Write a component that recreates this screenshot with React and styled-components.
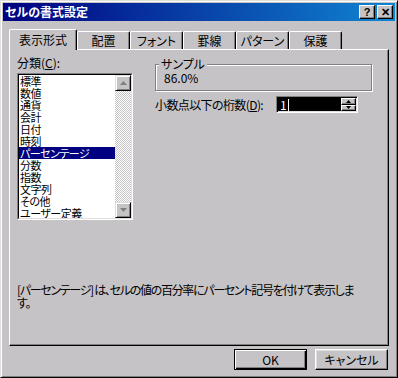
import styled, { createGlobalStyle } from 'styled-components'

const GlobalStyle = createGlobalStyle`
  body {
    margin: 0;
    background: #c6c3c6;
    font-family: "Noto Sans CJK JP", "Liberation Sans", sans-serif;
    font-size: 12px;
    font-feature-settings: "palt";
  }
`

const categories = [
  '標準', '数値', '通貨', '会計', '日付', '時刻', 'パーセンテージ',
  '分数', '指数', '文字列', 'その他', 'ユーザー定義',
]

const tabs = [
  { label: '表示形式', active: true },
  { label: '配置' },
  { label: 'フォント' },
  { label: '罫線' },
  { label: 'パターン' },
  { label: '保護' },
]

const Arrow = ({ down }) => (
  <svg width="7" height="4" viewBox="0 0 7 4">
    <polygon
      points={down ? '0,0 7,0 3.5,4' : '0,4 7,4 3.5,0'}
      fill="#808080"
    />
  </svg>
)

const SmallArrow = ({ down }) => (
  <svg width="5" height="3" viewBox="0 0 5 3">
    <polygon points={down ? '0,0 5,0 2.5,3' : '0,3 5,3 2.5,0'} fill="#000" />
  </svg>
)

const App = () => {
  return (
    <>
      <GlobalStyle />
      <Window>
        <TitleBar>
          <Title>セルの書式設定</Title>
          <CapButton>?</CapButton>
          <CapButton>✕</CapButton>
        </TitleBar>
        <Body>
          <TabBar>
            {tabs.map((t) => (
              <Tab key={t.label} $active={t.active}>
                {t.label}
              </Tab>
            ))}
          </TabBar>
          <Panel>
            <TopRow>
              <LeftCol>
                <Label>
                  分類(<Acc>C</Acc>):
                </Label>
                <ListBox>
                  <ListInner>
                    <Items>
                      {categories.map((c) => (
                        <Item key={c} $selected={c === 'パーセンテージ'}>
                          {c}
                        </Item>
                      ))}
                    </Items>
                    <ScrollBar>
                      <ScrollButton>
                        <Arrow />
                      </ScrollButton>
                      <Track />
                      <ScrollButton>
                        <Arrow down />
                      </ScrollButton>
                    </ScrollBar>
                  </ListInner>
                </ListBox>
              </LeftCol>
              <RightCol>
                <GroupBox>
                  <Legend>サンプル</Legend>
                  <SampleValue>86.0%</SampleValue>
                </GroupBox>
                <DecimalRow>
                  <DecimalLabel>
                    小数点以下の桁数(<Acc>D</Acc>):
                  </DecimalLabel>
                  <Spin>
                    <SpinField>
                      <SpinValue>1</SpinValue>
                    </SpinField>
                    <SpinButtons>
                      <SpinButton>
                        <SmallArrow />
                      </SpinButton>
                      <SpinButton>
                        <SmallArrow down />
                      </SpinButton>
                    </SpinButtons>
                  </Spin>
                </DecimalRow>
              </RightCol>
            </TopRow>
            <Description>
              <DescLine>[パーセンテージ]{'\u00a0'}は、セルの値の百分率にパーセント記号を付けて表示しま</DescLine>
              <DescLine>す。</DescLine>
            </Description>
          </Panel>
          <ButtonRow>
            <PushButton $default>OK</PushButton>
            <PushButton>キャンセル</PushButton>
          </ButtonRow>
        </Body>
      </Window>
    </>
  )
}

const Window = styled.div`
  width: 398px;
  height: 378px;
  box-sizing: border-box;
  background: #c6c3c6;
  border: 1px solid;
  border-color: #dfdfdf #000 #000 #dfdfdf;
  box-shadow: inset 1px 1px #fff, inset -1px -1px #808080;
  padding: 2px;
  display: flex;
  flex-direction: column;
`

const TitleBar = styled.div`
  height: 18px;
  display: flex;
  align-items: center;
  gap: 2px;
  padding: 0 2px 0 2px;
  background: linear-gradient(90deg, #000080, #1084d0);
`

const Title = styled.div`
  flex: 1;
  color: #fff;
  font-weight: bold;
  font-size: 12px;
  line-height: 14px;
  white-space: nowrap;
`

const CapButton = styled.div`
  width: 16px;
  height: 14px;
  box-sizing: border-box;
  background: #c6c3c6;
  border: 1px solid;
  border-color: #fff #000 #000 #fff;
  box-shadow: inset -1px -1px #808080;
  display: flex;
  align-items: center;
  justify-content: center;
  font-family: "Liberation Sans", sans-serif;
  font-weight: bold;
  font-size: 11px;
  line-height: 1;
  color: #000;
`

const Body = styled.div`
  display: flex;
  flex-direction: column;
  padding: 8px 0 0 6px;
`

const TabBar = styled.div`
  height: 20px;
  display: flex;
  align-items: flex-end;
  position: relative;
  z-index: 1;
`

const Tab = styled.div`
  width: ${(p) => (p.$active ? 68 : 53)}px;
  height: ${(p) => (p.$active ? 21 : 18)}px;
  margin-bottom: ${(p) => (p.$active ? -1 : 0)}px;
  box-sizing: border-box;
  background: #c6c3c6;
  border-top: 1px solid #fff;
  border-left: 1px solid #fff;
  border-right: 1px solid #000;
  border-radius: 2px 2px 0 0;
  box-shadow: inset -1px 0 #808080;
  display: flex;
  align-items: center;
  justify-content: center;
  padding-top: ${(p) => (p.$active ? 0 : 1)}px;
  line-height: 12px;
  white-space: nowrap;
`

const Panel = styled.div`
  width: 380px;
  height: 297px;
  box-sizing: border-box;
  border: 1px solid;
  border-color: #fff #000 #000 #fff;
  box-shadow: inset -1px -1px #808080;
  padding: 7px;
  display: flex;
  flex-direction: column;
`

const TopRow = styled.div`
  display: flex;
`

const LeftCol = styled.div`
  width: 116px;
  display: flex;
  flex-direction: column;
`

const Label = styled.div`
  line-height: 12px;
  height: 12px;
  white-space: nowrap;
`

const Acc = styled.span`
  text-decoration: underline;
`

const ListBox = styled.div`
  margin-top: 4px;
  height: 147px;
  box-sizing: border-box;
  border: 1px solid;
  border-color: #808080 #fff #fff #808080;
`

const ListInner = styled.div`
  height: 100%;
  box-sizing: border-box;
  border: 1px solid;
  border-color: #000 #dfdfdf #dfdfdf #000;
  background: #fff;
  display: flex;
  overflow: hidden;
`

const Items = styled.div`
  flex: 1;
  display: flex;
  flex-direction: column;
`

const Item = styled.div`
  height: 12px;
  line-height: 12px;
  font-size: 11px;
  letter-spacing: -0.5px;
  padding-left: 1px;
  white-space: nowrap;
  color: ${(p) => (p.$selected ? '#fff' : '#000')};
  background: ${(p) => (p.$selected ? '#000080' : 'transparent')};
`

const ScrollBar = styled.div`
  width: 16px;
  display: flex;
  flex-direction: column;
`

const ScrollButton = styled.div`
  width: 16px;
  height: 16px;
  box-sizing: border-box;
  background: #c6c3c6;
  border: 1px solid;
  border-color: #dfdfdf #000 #000 #dfdfdf;
  box-shadow: inset 1px 1px #fff, inset -1px -1px #808080;
  display: flex;
  align-items: center;
  justify-content: center;
`

const Track = styled.div`
  flex: 1;
  background-image: conic-gradient(#fff 25%, #c6c3c6 0 50%, #fff 0 75%, #c6c3c6 0);
  background-size: 2px 2px;
`

const RightCol = styled.div`
  margin-left: 22px;
  width: 217px;
  display: flex;
  flex-direction: column;
`

const GroupBox = styled.div`
  position: relative;
  margin-top: 7px;
  height: 27px;
  box-sizing: border-box;
  border: 1px solid #808080;
  box-shadow: inset 1px 1px #fff, 1px 1px #fff;
  padding: 7px 8px 0;
`

const Legend = styled.span`
  position: absolute;
  top: -7px;
  left: 3px;
  padding: 0 2px;
  background: #c6c3c6;
  line-height: 12px;
`

const SampleValue = styled.div`
  line-height: 12px;
`

const DecimalRow = styled.div`
  margin-top: 5px;
  display: flex;
  align-items: center;
  height: 17px;
`

const DecimalLabel = styled.div`
  width: 121px;
  line-height: 12px;
  letter-spacing: -0.6px;
  white-space: nowrap;
`

const Spin = styled.div`
  width: 82px;
  height: 17px;
  box-sizing: border-box;
  border: 1px solid;
  border-color: #808080 #fff #fff #808080;
  box-shadow: inset 1px 1px #000, inset -1px -1px #dfdfdf;
  padding: 2px;
  display: flex;
  background: #000;
`

const SpinField = styled.div`
  flex: 1;
  display: flex;
  align-items: center;
`

const SpinValue = styled.span`
  color: #fff;
  line-height: 12px;
  padding-left: 1px;
  border-right: 1px solid #fff;
  padding-right: 1px;
`

const SpinButtons = styled.div`
  width: 15px;
  display: flex;
  flex-direction: column;
  margin: -1px -1px -1px 0;
`

const SpinButton = styled.div`
  flex: 1;
  box-sizing: border-box;
  background: #c6c3c6;
  border: 1px solid;
  border-color: #fff #000 #000 #fff;
  box-shadow: inset -1px -1px #808080;
  display: flex;
  align-items: center;
  justify-content: center;
`

const Description = styled.div`
  margin-top: 63px;
  display: flex;
  flex-direction: column;
`

const DescLine = styled.div`
  line-height: 13px;
  letter-spacing: -1.3px;
  white-space: nowrap;
`

const ButtonRow = styled.div`
  width: 380px;
  margin-top: 3px;
  padding-right: 1px;
  box-sizing: border-box;
  display: flex;
  justify-content: flex-end;
  gap: 8px;
`

const PushButton = styled.div`
  width: 73px;
  height: 21px;
  box-sizing: border-box;
  background: #c6c3c6;
  border: 1px solid;
  border-color: ${(p) => (p.$default ? '#000' : '#fff #000 #000 #fff')};
  box-shadow: ${(p) =>
    p.$default
      ? 'inset 1px 1px #fff, inset -1px -1px #000, inset -2px -2px #808080'
      : 'inset -1px -1px #808080, inset 1px 1px #dfdfdf'};
  display: flex;
  align-items: center;
  justify-content: center;
  line-height: 12px;
`

export default App
